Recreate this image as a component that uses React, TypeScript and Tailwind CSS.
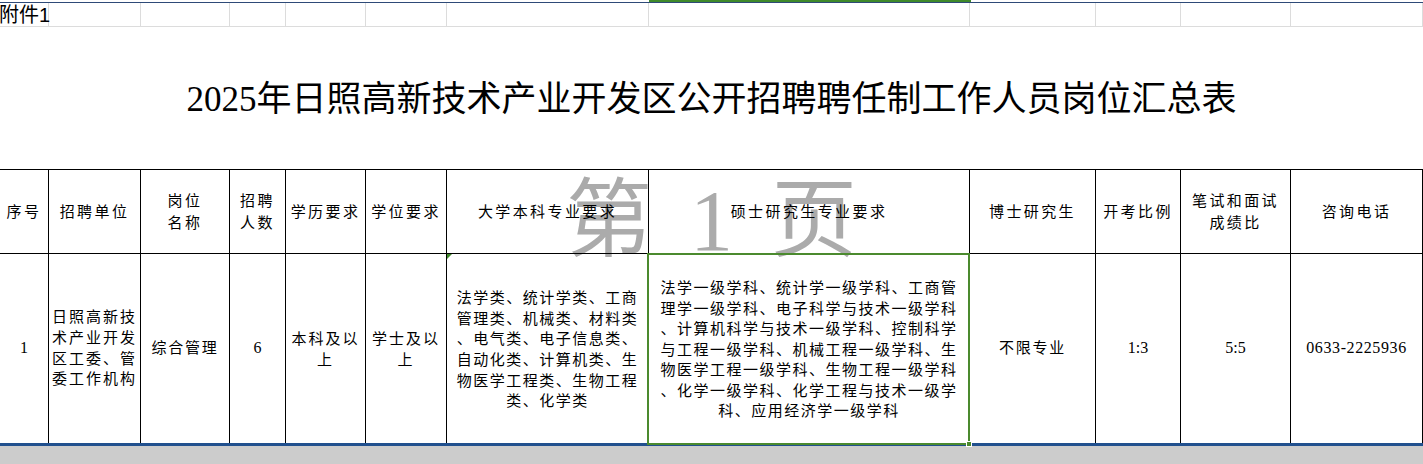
const cols = 'grid grid-cols-[49px_92px_89px_56px_80px_81px_202px_321px_126px_85px_110px_132px]'

const bachelor = [
  '法学类、统计学类、工商',
  '管理类、机械类、材料类',
  '、电气类、电子信息类、',
  '自动化类、计算机类、生',
  '物医学工程类、生物工程',
  '类、化学类',
]

const master = [
  '法学一级学科、统计学一级学科、工商管',
  '理学一级学科、电子科学与技术一级学科',
  '、计算机科学与技术一级学科、控制科学',
  '与工程一级学科、机械工程一级学科、生',
  '物医学工程一级学科、生物工程一级学科',
  '、化学一级学科、化学工程与技术一级学',
  '科、应用经济学一级学科',
]

function Lines({ lines }: { lines: string[] }) {
  return (
    <div className="flex flex-col items-center">
      {lines.map((l) => (
        <span key={l} className="whitespace-nowrap">{l}</span>
      ))}
    </div>
  )
}

export default function App() {
  const head = 'flex items-center justify-center text-center border-r border-black'
  const cell = 'flex items-center justify-center text-center border-r border-black'

  return (
    <div className="relative w-[1423px] h-[464px] overflow-hidden bg-white text-black font-['Liberation_Serif','Noto_Sans_CJK_SC',serif]">
      {/* page watermark */}
      <div className="absolute left-[566px] top-[178px] flex items-baseline gap-[38px] text-[86px] leading-none text-[#ababab] pointer-events-none">
        <span>第</span>
        <span>1</span>
        <span>页</span>
      </div>

      <div className="relative">
        <div className="flex h-[2px]">
          <div className="w-[649px]" />
          <div className="w-[322px] bg-[#3f8a2a]" />
        </div>
        <div className="h-px bg-[#2e4a78]" />

        <div className={`${cols} h-[24px] border-b border-[#dcdcdc]`}>
          <div className="border-r border-[#dcdcdc] overflow-visible whitespace-nowrap text-[20px] leading-[24px] -ml-[1px] font-['Liberation_Sans','Noto_Sans_CJK_SC',sans-serif]">
            附件1
          </div>
          {Array.from({ length: 11 }).map((_, i) => (
            <div key={i} className="border-r border-[#dcdcdc]" />
          ))}
        </div>

        <div className="h-[142px] flex items-center justify-center">
          <h1 className="text-[35px] leading-none pt-[2px]">2025年日照高新技术产业开发区公开招聘聘任制工作人员岗位汇总表</h1>
        </div>

        <div className={`${cols} h-[85px] border-t border-b border-black text-[15px] tracking-[2.4px] leading-[22px]`}>
          <div className={head}>序号</div>
          <div className={head}>招聘单位</div>
          <div className={head}>岗位<br />名称</div>
          <div className={head}>招聘<br />人数</div>
          <div className={head}>学历要求</div>
          <div className={head}>学位要求</div>
          <div className={head}>大学本科专业要求</div>
          <div className={head}>硕士研究生专业要求</div>
          <div className={head}>博士研究生</div>
          <div className={head}>开考比例</div>
          <div className={head}>笔试和面试<br />成绩比</div>
          <div className={head}>咨询电话</div>
        </div>

        <div className={`${cols} h-[189px] text-[15px] tracking-[1.5px] leading-[20.6px]`}>
          <div className={`${cell} text-[16px] tracking-normal`}>1</div>
          <div className={`${cell} tracking-[2px]`}>
            <Lines lines={['日照高新技', '术产业开发', '区工委、管', '委工作机构']} />
          </div>
          <div className={`${cell} tracking-[1.8px]`}>综合管理</div>
          <div className={`${cell} text-[16px] tracking-normal`}>6</div>
          <div className={`${cell} tracking-[2px] pt-[3px]`}>
            <Lines lines={['本科及以', '上']} />
          </div>
          <div className={`${cell} tracking-[2px] pt-[3px]`}>
            <Lines lines={['学士及以', '上']} />
          </div>
          <div className={`${cell} relative pt-[3px]`}>
            <span className="absolute left-0 top-0 w-0 h-0 border-t-[5px] border-r-[5px] border-t-[#3f8a2a] border-r-transparent" />
            <Lines lines={bachelor} />
          </div>
          <div className={`${cell} relative pt-[3px]`}>
            <Lines lines={master} />
            <div className="absolute -left-[2px] -top-[1px] -right-[1px] -bottom-[2px] border-2 border-[#4b8a2e]" />
            <span className="absolute -right-[3px] -bottom-[4px] w-[6px] h-[6px] bg-[#4b8a2e] border border-white" />
          </div>
          <div className={`${cell} tracking-[1.8px]`}>不限专业</div>
          <div className={`${cell} text-[16px] tracking-normal`}>1:3</div>
          <div className={`${cell} text-[16px] tracking-normal`}>5:5</div>
          <div className={`${cell} text-[16px] tracking-[0.6px]`}>0633-2225936</div>
        </div>

        <div className="h-[3px] bg-[#21508e]" />
        <div className="h-[30px] bg-[#cccccc]" />
      </div>
    </div>
  )
}
